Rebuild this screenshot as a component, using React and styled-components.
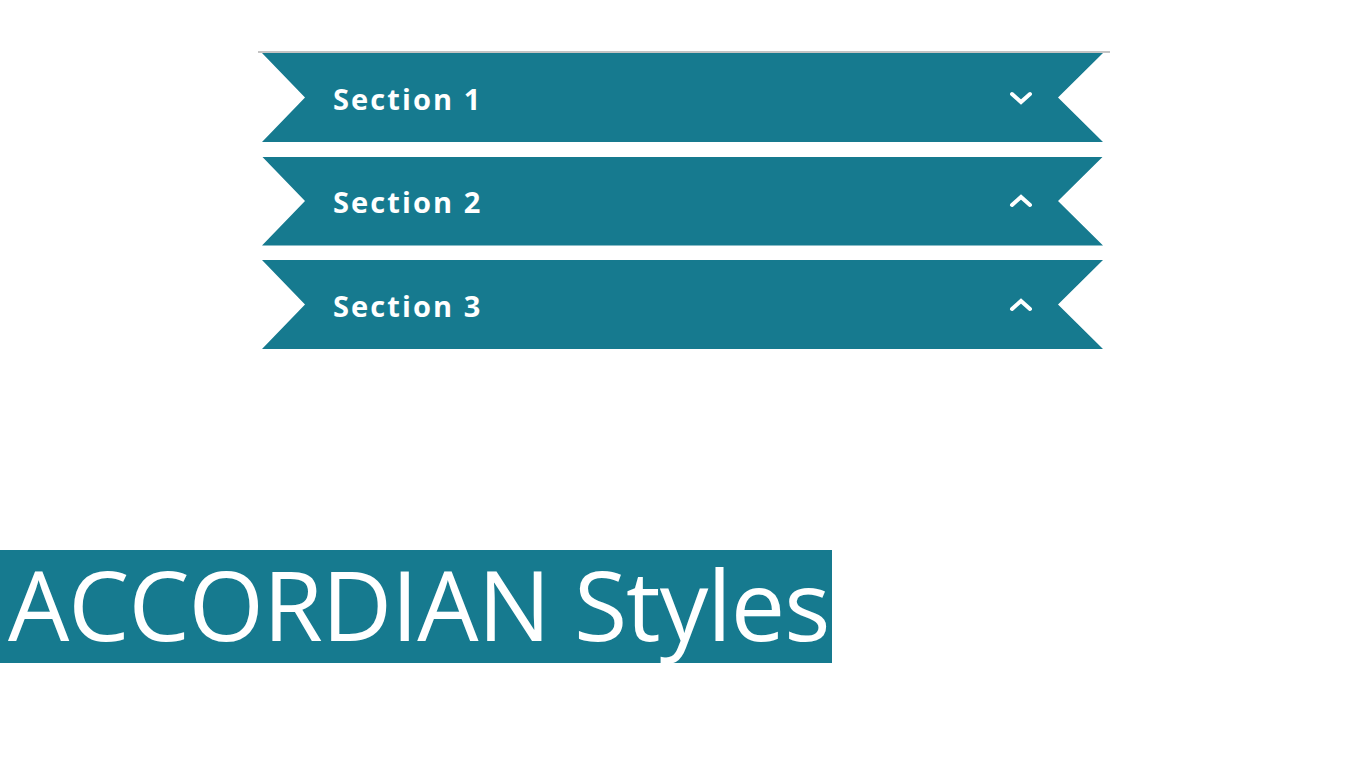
import React from "react";
import styled, { createGlobalStyle } from "styled-components";

const Global = createGlobalStyle`
  html, body { margin: 0; padding: 0; background: #fff; }
  body { font-family: "Open Sans", sans-serif; }
`;

const TEAL = "#167a8f";

const Page = styled.div`
  width: 1366px;
  height: 768px;
  display: flex;
  flex-direction: column;
  overflow: hidden;
`;

const Accordion = styled.div`
  margin: 51px 0 0 258px;
  width: 852px;
  border-top: 2px solid #c4c4c4;
  display: flex;
  flex-direction: column;
  gap: 14.5px;
  padding-left: 4px;
  box-sizing: border-box;
`;

const Ribbon = styled.button`
  all: unset;
  box-sizing: border-box;
  width: 841px;
  height: 89px;
  background: ${TEAL};
  clip-path: polygon(0 0, 100% 0, calc(100% - 45px) 50%, 100% 100%, 0 100%, 43px 50%);
  display: flex;
  align-items: center;
  justify-content: space-between;
  padding: 0 70px 0 71px;
  color: #fff;
  cursor: pointer;
`;

const Title = styled.span`
  font-family: "Open Sans", sans-serif;
  font-weight: 700;
  font-size: 29px;
  letter-spacing: 2.1px;
  margin-top: 1px;
`;

const Chevron = ({ up }) => (
  <svg width="24" height="16" viewBox="0 0 24 16">
    <path
      d={up ? "M3 12 L12 4 L21 12" : "M3 4 L12 12 L21 4"}
      fill="none"
      stroke="#fff"
      strokeWidth="4"
      strokeLinecap="round"
      strokeLinejoin="miter"
    />
  </svg>
);

const Banner = styled.div`
  margin-top: 201px;
  align-self: flex-start;
  background: ${TEAL};
  color: #fff;
  height: 113px;
  padding: 0 3px 6px 8px;
  box-sizing: border-box;
  display: flex;
  align-items: center;
  font-family: "Open Sans", sans-serif;
  font-size: 97px;
  letter-spacing: -1px;
  line-height: 1;
`;

const sections = [
  { title: "Section 1", up: false },
  { title: "Section 2", up: true },
  { title: "Section 3", up: true },
];

export default function App() {
  return (
    <Page>
      <Global />
      <Accordion>
        {sections.map((s) => (
          <Ribbon key={s.title}>
            <Title>{s.title}</Title>
            <Chevron up={s.up} />
          </Ribbon>
        ))}
      </Accordion>
      <Banner>ACCORDIAN Styles</Banner>
    </Page>
  );
}
